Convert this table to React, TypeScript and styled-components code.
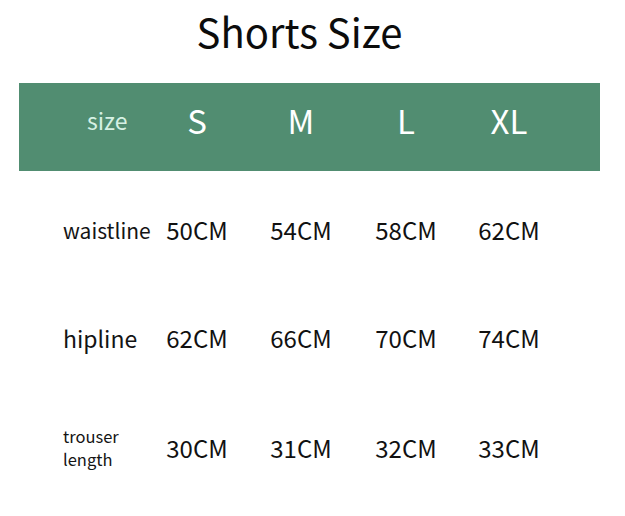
import React from 'react'
import styled, { createGlobalStyle } from 'styled-components'

const GlobalStyle = createGlobalStyle`
  html, body {
    margin: 0;
    padding: 0;
    background: #ffffff;
  }
  body {
    font-family: 'Noto Sans CJK SC', 'Noto Sans', sans-serif;
    color: #111111;
  }
`

const COLS = '126px 104px 104px 106px 100px'

const Page = styled.div`
  width: 625px;
  height: 516px;
  display: flex;
  flex-direction: column;
  overflow: hidden;
`

const Title = styled.h1`
  margin: 6px 0 4px;
  height: 50px;
  line-height: 50px;
  padding-right: 26px;
  text-align: center;
  font-size: 40px;
  font-weight: 400;
  color: #0c0c0c;
`

const HeaderBar = styled.div`
  margin: 23px 0 0 19px;
  width: 581px;
  height: 88px;
  box-sizing: border-box;
  padding-bottom: 14px;
  background: #518d71;
  display: grid;
  grid-template-columns: ${COLS};
  align-items: center;
`

const HeadCell = styled.div<{ $label?: boolean }>`
  color: ${(p) => (p.$label ? '#d6f1e4' : '#ffffff')};
  font-size: ${(p) => (p.$label ? '23px' : '33px')};
  text-align: ${(p) => (p.$label ? 'left' : 'center')};
  padding-left: ${(p) => (p.$label ? '68px' : '0')};
  line-height: 1;
`

const Row = styled.div<{ $h: number }>`
  margin-left: 19px;
  width: 581px;
  height: ${(p) => p.$h}px;
  display: grid;
  grid-template-columns: ${COLS};
  align-items: center;
`

const Label = styled.div<{ $size: number }>`
  padding-left: 44px;
  font-size: ${(p) => p.$size}px;
  line-height: 23px;
  color: #141414;
`

const Value = styled.div`
  text-align: center;
  font-size: 24px;
  line-height: 1;
  color: #111111;
`

const sizes = ['S', 'M', 'L', 'XL']

const rows = [
  { label: ['waistline'], labelSize: 21, h: 118, values: ['50CM', '54CM', '58CM', '62CM'] },
  { label: ['hipline'], labelSize: 23, h: 98, values: ['62CM', '66CM', '70CM', '74CM'] },
  { label: ['trouser', 'length'], labelSize: 16.5, h: 122, values: ['30CM', '31CM', '32CM', '33CM'] },
]

const App = () => {
  return (
    <Page>
      <GlobalStyle />
      <Title>Shorts Size</Title>
      <HeaderBar>
        <HeadCell $label>size</HeadCell>
        {sizes.map((s) => (
          <HeadCell key={s}>{s}</HeadCell>
        ))}
      </HeaderBar>
      {rows.map((r, i) => (
        <Row key={`row-${i}`} $h={r.h}>
          <Label $size={r.labelSize}>
            {r.label.map((l) => (
              <div key={l}>{l}</div>
            ))}
          </Label>
          {r.values.map((v) => (
            <Value key={v}>{v}</Value>
          ))}
        </Row>
      ))}
    </Page>
  )
}

export default App
